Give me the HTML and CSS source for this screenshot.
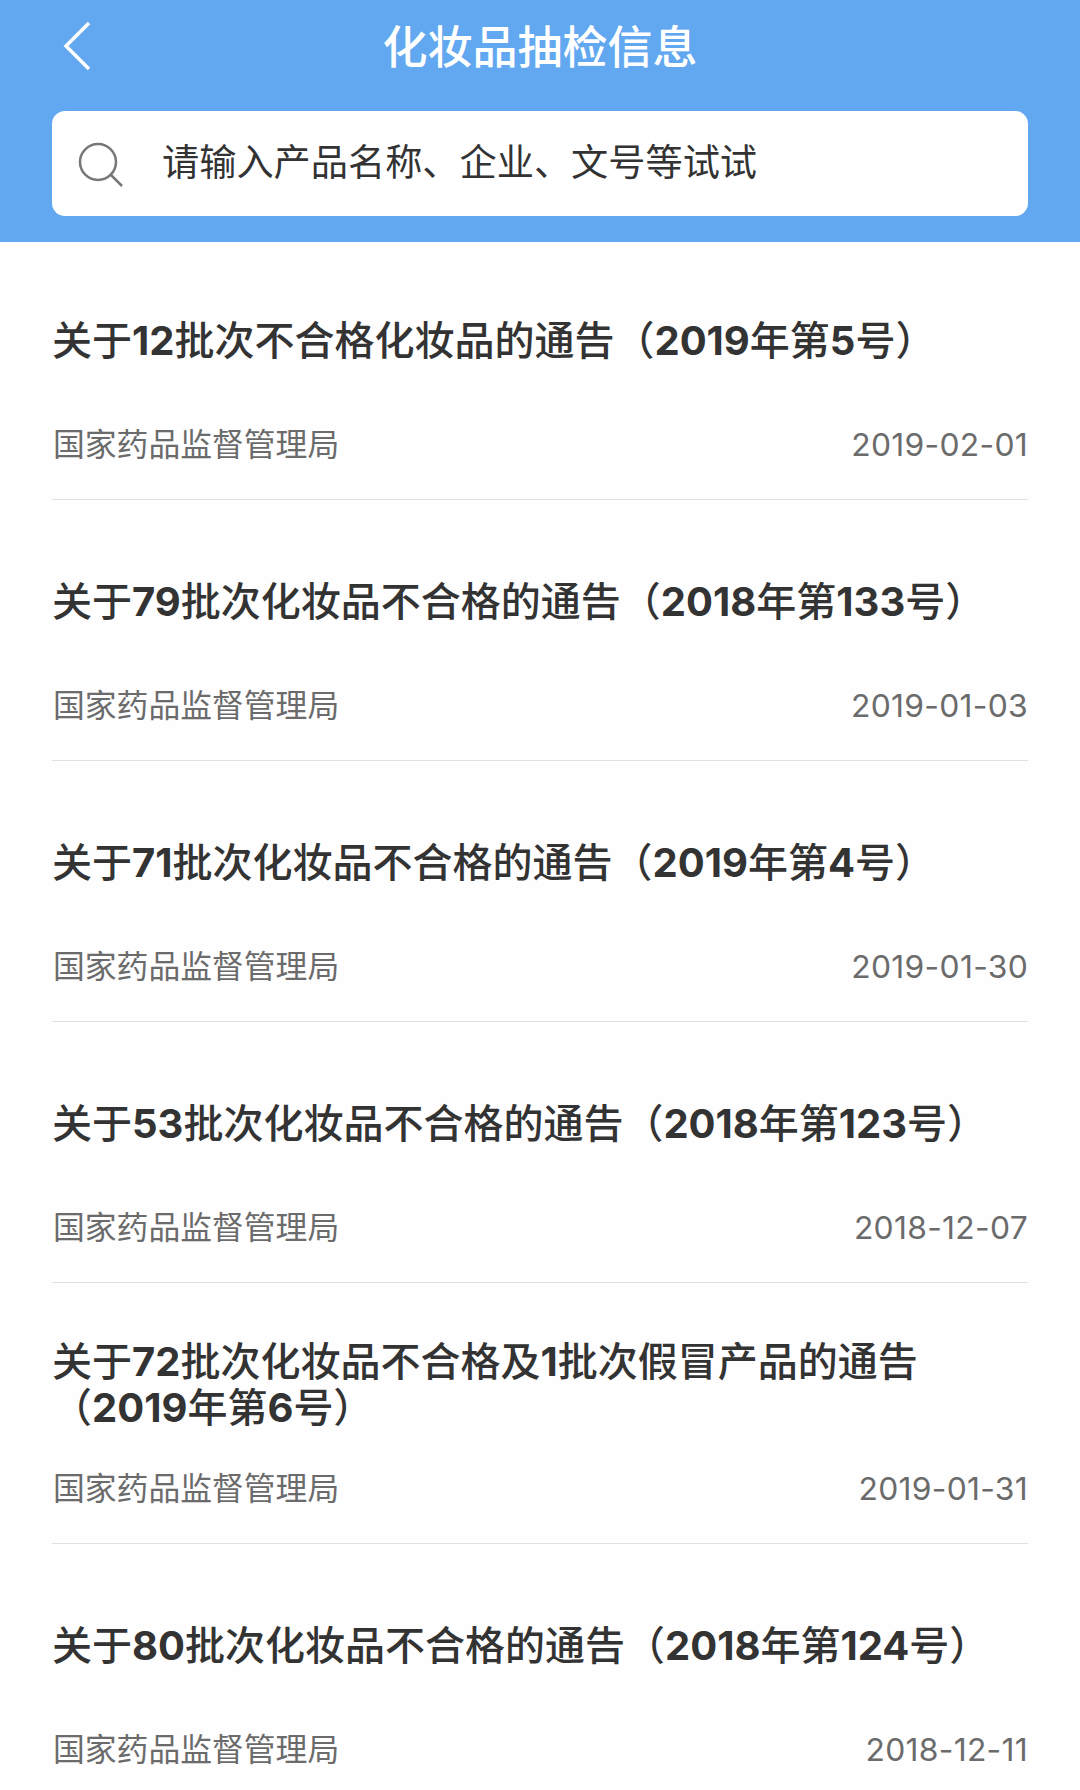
FILE: index.html
```html
<!DOCTYPE html>
<html lang="zh-CN">
<head>
    <meta charset="UTF-8">
    <meta name="viewport" content="width=device-width, initial-scale=1.0">
    <title>化妆品抽检信息</title>
    <link rel="stylesheet" href="styles.css">
</head>
<body>
    <div class="header">
        <div class="nav">
            <svg class="back" viewBox="0 0 28 50"><path d="M26 2 L3 25 L26 48"/></svg>
            <h1>化妆品抽检信息</h1>
        </div>
        <div class="search">
            <svg class="search-icon" viewBox="0 0 46 46"><circle cx="20" cy="20" r="18"/><path d="M32 32 L44 44"/></svg>
            <span>请输入产品名称、企业、文号等试试</span>
        </div>
    </div>
    <div class="list">
        <div class="item">
            <div class="title"><h2>关于<b>12</b>批次不合格化妆品的通告（<b>2019</b>年第<b>5</b>号）</h2></div>
            <div class="info"><span>国家药品监督管理局</span><span class="date">2019-02-01</span></div>
        </div>
        <div class="item">
            <div class="title"><h2>关于<b>79</b>批次化妆品不合格的通告（<b>2018</b>年第<b>133</b>号）</h2></div>
            <div class="info"><span>国家药品监督管理局</span><span class="date">2019-01-03</span></div>
        </div>
        <div class="item">
            <div class="title"><h2>关于<b>71</b>批次化妆品不合格的通告（<b>2019</b>年第<b>4</b>号）</h2></div>
            <div class="info"><span>国家药品监督管理局</span><span class="date">2019-01-30</span></div>
        </div>
        <div class="item">
            <div class="title"><h2>关于<b>53</b>批次化妆品不合格的通告（<b>2018</b>年第<b>123</b>号）</h2></div>
            <div class="info"><span>国家药品监督管理局</span><span class="date">2018-12-07</span></div>
        </div>
        <div class="item">
            <div class="title"><h2>关于<b>72</b>批次化妆品不合格及<b>1</b>批次假冒产品的通告<br>（<b>2019</b>年第<b>6</b>号）</h2></div>
            <div class="info"><span>国家药品监督管理局</span><span class="date">2019-01-31</span></div>
        </div>
        <div class="item">
            <div class="title"><h2>关于<b>80</b>批次化妆品不合格的通告（<b>2018</b>年第<b>124</b>号）</h2></div>
            <div class="info"><span>国家药品监督管理局</span><span class="date">2018-12-11</span></div>
        </div>
    </div>
</body>
</html>
```

FILE: styles.css
```css
* {
    margin: 0;
    padding: 0;
    box-sizing: border-box;
}

body {
    height: 1790px;
    overflow: hidden;
    background-color: #fefefe;
    font-family: Inter, "Noto Sans CJK SC", sans-serif;
}

/* 顶部导航和搜索 */
.header {
    height: 242px;
    padding: 0 52px;
    background-color: #62a8f0;
}

.nav {
    display: grid;
    grid-template-columns: 60px 1fr 60px;
    align-items: center;
    height: 111px;
    padding-bottom: 20px;
}

.back {
    width: 28px;
    height: 50px;
    margin-left: 11px;
    fill: none;
    stroke: #fff;
    stroke-width: 3.5;
}

.nav h1 {
    padding-bottom: 3px;
    color: #fff;
    font-size: 45px;
    font-weight: 500;
    text-align: center;
    white-space: nowrap;
}

.search {
    display: flex;
    align-items: center;
    height: 105px;
    padding-left: 26px;
    border-radius: 13px;
    background-color: #fff;
}

.search-icon {
    width: 46px;
    height: 46px;
    margin-top: 2px;
    fill: none;
    stroke: #777;
    stroke-width: 2.5;
}

.search span {
    margin-left: 38px;
    padding-bottom: 7px;
    color: #333;
    font-size: 37.2px;
}

/* 通告列表 */
.list {
    padding: 0 52px;
}

.item {
    height: 261px;
    padding-top: 47px;
    border-bottom: 1px solid #e0e0e0;
}

.item:first-child {
    height: 258px;
    padding-top: 44px;
}

.title {
    display: flex;
    align-items: center;
    height: 110px;
}

.title h2 {
    color: #333;
    font-size: 40px;
    line-height: 46px;
    font-weight: 500;
    white-space: nowrap;
}

.title b {
    font-weight: 700;
}

.info {
    display: flex;
    justify-content: space-between;
    margin-top: 26px;
    padding-left: 1px;
    color: #6b6b6b;
    font-size: 31.8px;
    line-height: 46px;
}

.date {
    letter-spacing: 0.3px;
}
```
